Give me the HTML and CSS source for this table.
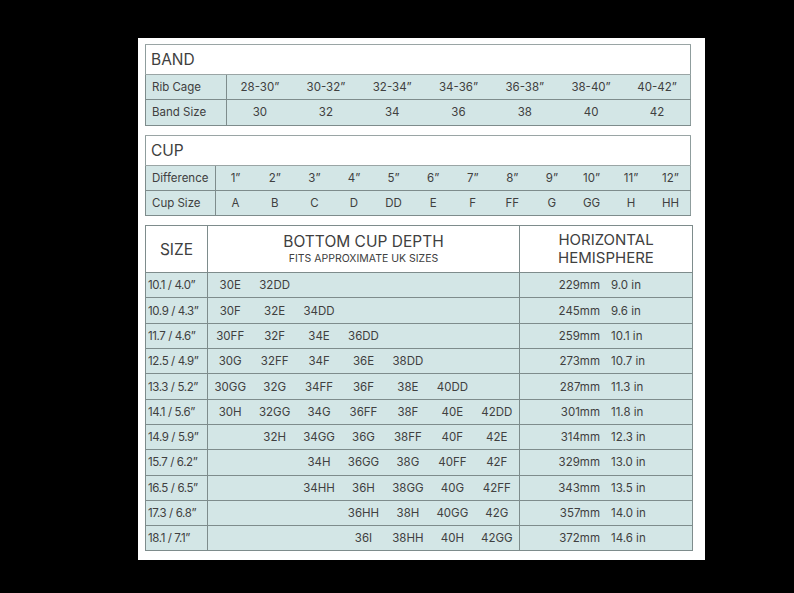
FILE: index.html
```html
<!DOCTYPE html>
<html>
<head>
<meta charset="utf-8">
<link rel="stylesheet" href="styles.css">
</head>
<body>
<div class="panel">
  <table class="box band">
    <colgroup><col class="c-label-band"><col><col><col><col><col><col><col></colgroup>
    <tr class="head"><td colspan="8">BAND</td></tr>
    <tr><td class="lbl">Rib Cage</td><td>28-30”</td><td>30-32”</td><td>32-34”</td><td>34-36”</td><td>36-38”</td><td>38-40”</td><td>40-42”</td></tr>
    <tr><td class="lbl">Band Size</td><td>30</td><td>32</td><td>34</td><td>36</td><td>38</td><td>40</td><td>42</td></tr>
  </table>

  <table class="box cup">
    <colgroup><col class="c-label-cup"><col><col><col><col><col><col><col><col><col><col><col><col></colgroup>
    <tr class="head"><td colspan="13">CUP</td></tr>
    <tr><td class="lbl">Difference</td><td>1”</td><td>2”</td><td>3”</td><td>4”</td><td>5”</td><td>6”</td><td>7”</td><td>8”</td><td>9”</td><td>10”</td><td>11”</td><td>12”</td></tr>
    <tr><td class="lbl">Cup Size</td><td>A</td><td>B</td><td>C</td><td>D</td><td>DD</td><td>E</td><td>F</td><td>FF</td><td>G</td><td>GG</td><td>H</td><td>HH</td></tr>
  </table>

  <table class="box size">
    <colgroup><col class="c-size"><col class="c-depth"><col class="c-hemi"></colgroup>
    <tr class="shead">
      <td class="t-size">SIZE</td>
      <td class="t-depth"><div class="big">BOTTOM CUP DEPTH</div><div class="small">FITS APPROXIMATE UK SIZES</div></td>
      <td class="t-hemi"><div>HORIZONTAL</div><div>HEMISPHERE</div></td>
    </tr>
    <tr><td class="lbl">10.1 / 4.0”</td><td><div class="cups"><span>30E</span><span>32DD</span><span></span><span></span><span></span><span></span><span></span></div></td><td><div class="hemi"><span>229mm</span><span>9.0 in</span></div></td></tr>
    <tr><td class="lbl">10.9 / 4.3”</td><td><div class="cups"><span>30F</span><span>32E</span><span>34DD</span><span></span><span></span><span></span><span></span></div></td><td><div class="hemi"><span>245mm</span><span>9.6 in</span></div></td></tr>
    <tr><td class="lbl">11.7 / 4.6”</td><td><div class="cups"><span>30FF</span><span>32F</span><span>34E</span><span>36DD</span><span></span><span></span><span></span></div></td><td><div class="hemi"><span>259mm</span><span>10.1 in</span></div></td></tr>
    <tr><td class="lbl">12.5 / 4.9”</td><td><div class="cups"><span>30G</span><span>32FF</span><span>34F</span><span>36E</span><span>38DD</span><span></span><span></span></div></td><td><div class="hemi"><span>273mm</span><span>10.7 in</span></div></td></tr>
    <tr><td class="lbl">13.3 / 5.2”</td><td><div class="cups"><span>30GG</span><span>32G</span><span>34FF</span><span>36F</span><span>38E</span><span>40DD</span><span></span></div></td><td><div class="hemi"><span>287mm</span><span>11.3 in</span></div></td></tr>
    <tr><td class="lbl">14.1 / 5.6”</td><td><div class="cups"><span>30H</span><span>32GG</span><span>34G</span><span>36FF</span><span>38F</span><span>40E</span><span>42DD</span></div></td><td><div class="hemi"><span>301mm</span><span>11.8 in</span></div></td></tr>
    <tr><td class="lbl">14.9 / 5.9”</td><td><div class="cups"><span></span><span>32H</span><span>34GG</span><span>36G</span><span>38FF</span><span>40F</span><span>42E</span></div></td><td><div class="hemi"><span>314mm</span><span>12.3 in</span></div></td></tr>
    <tr><td class="lbl">15.7 / 6.2”</td><td><div class="cups"><span></span><span></span><span>34H</span><span>36GG</span><span>38G</span><span>40FF</span><span>42F</span></div></td><td><div class="hemi"><span>329mm</span><span>13.0 in</span></div></td></tr>
    <tr><td class="lbl">16.5 / 6.5”</td><td><div class="cups"><span></span><span></span><span>34HH</span><span>36H</span><span>38GG</span><span>40G</span><span>42FF</span></div></td><td><div class="hemi"><span>343mm</span><span>13.5 in</span></div></td></tr>
    <tr><td class="lbl">17.3 / 6.8”</td><td><div class="cups"><span></span><span></span><span></span><span>36HH</span><span>38H</span><span>40GG</span><span>42G</span></div></td><td><div class="hemi"><span>357mm</span><span>14.0 in</span></div></td></tr>
    <tr><td class="lbl">18.1 / 7.1”</td><td><div class="cups"><span></span><span></span><span></span><span>36I</span><span>38HH</span><span>40H</span><span>42GG</span></div></td><td><div class="hemi"><span>372mm</span><span>14.6 in</span></div></td></tr>
  </table>
</div>
</body>
</html>
```

FILE: styles.css
```css
html, body {
  margin: 0;
  padding: 0;
  background: #000;
}
body {
  width: 794px;
  height: 593px;
  font-family: Inter, "DejaVu Sans", sans-serif;
  color: #404040;
}
.panel {
  margin: 38px 0 0 138px;
  width: 546px;
  height: 508px;
  background: #fff;
  padding: 6px 14px 8px 7px;
  display: flex;
  flex-direction: column;
  gap: 9px;
}
.box {
  border-collapse: collapse;
  table-layout: fixed;
  font-size: 11.5px;
  border: 1px solid #8f9d9d;
}
.box td {
  border: 1px solid #7e8c8c;
  text-align: center;
  padding: 0;
  background: #d3e6e6;
  white-space: nowrap;
}
.band td:not(.lbl), .cup td:not(.lbl) {
  border-left: none;
  border-right: none;
}
.band, .cup { width: 546px; }
.size { width: 547px; }
.c-label-band { width: 81px; }
.c-label-cup { width: 70px; }
.head td {
  background: #fff;
  text-align: left;
  font-size: 15.5px;
  height: 29px;
  padding-left: 5px;
  border-color: #9aa5a5;
}
.band tr:not(.head) td, .cup tr:not(.head) td { height: 24.3px; }
.box td.lbl {
  text-align: left;
  padding-left: 6px;
}
.c-size { width: 62px; }
.c-depth { width: 312px; }
.c-hemi { width: 173px; }
.shead td {
  background: #fff;
  height: 46px;
  font-size: 15.5px;
}
.t-hemi div { line-height: 18.5px; font-size: 15px; }
.t-depth .big { font-size: 15.5px; line-height: 18.5px; }
.t-depth .small { font-size: 10.5px; line-height: 13px; }
.size tr:not(.shead) td { height: 24.3px; }
.size td.lbl { padding-left: 2px; letter-spacing: -0.4px; }
.cups {
  display: grid;
  grid-template-columns: repeat(7, 1fr);
}
.hemi {
  display: grid;
  grid-template-columns: 80px 1fr;
  column-gap: 11px;
  text-align: left;
}
.hemi span:first-child { text-align: right; }
```
